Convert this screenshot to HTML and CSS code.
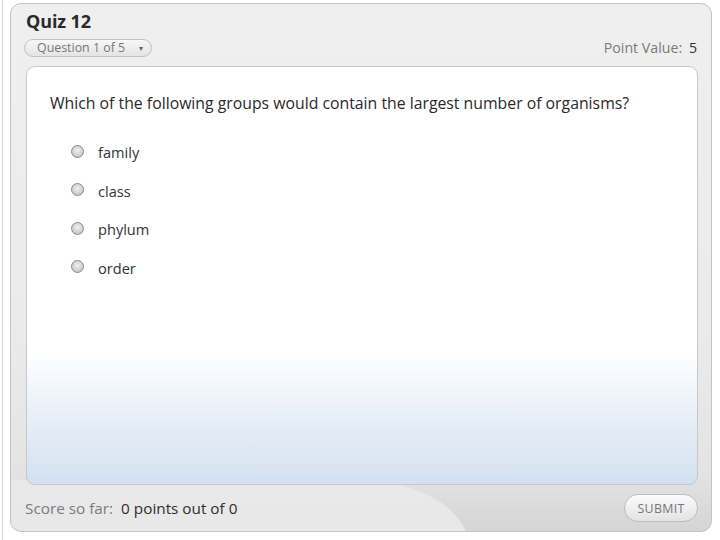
FILE: index.html
```html
<!DOCTYPE html>
<html>
<head>
<meta charset="utf-8">
<link rel="stylesheet" href="styles.css">
</head>
<body>
<div class="edge"></div>
<div class="panel">
  <div class="swoosh"></div>
  <header class="head">
    <h1 class="title">Quiz 12</h1>
    <div class="subrow">
      <div class="picker"><span>Question 1 of 5</span><span class="caret">▾</span></div>
      <div class="points"><span class="muted">Point Value:</span> <span class="val">5</span></div>
    </div>
  </header>
  <main class="card">
    <p class="question">Which of the following groups would contain the largest number of organisms?</p>
    <ul class="options">
      <li class="opt"><span class="radio"></span><span>family</span></li>
      <li class="opt"><span class="radio"></span><span>class</span></li>
      <li class="opt"><span class="radio"></span><span>phylum</span></li>
      <li class="opt"><span class="radio"></span><span>order</span></li>
    </ul>
  </main>
  <footer class="foot">
    <div class="score"><span class="muted">Score so far:</span> <span class="val">0 points out of 0</span></div>
    <button class="submit">SUBMIT</button>
  </footer>
</div>
</body>
</html>
```
FILE: styles.css
```css
html, body { margin: 0; padding: 0; background: #fff; }
body {
  width: 720px; height: 540px; overflow: hidden;
  font-family: "Open Sans", "Noto Sans", sans-serif;
  position: relative;
}
.edge {
  position: absolute; left: 2px; top: 0; width: 1px; height: 540px;
  background: #d4d4d4;
}
.panel {
  position: absolute; left: 10px; top: 3px;
  width: 702px; height: 529px;
  border: 1px solid #c4c4c4;
  border-radius: 11px;
  background: linear-gradient(#efefef 0, #ebebeb 60%, #e4e4e4 88%, #d5d5d5 100%);
  box-sizing: border-box;
  display: flex; flex-direction: column;
  overflow: hidden;
}
.swoosh {
  position: absolute; left: -20px; top: 476px;
  width: 479px; height: 120px;
  border-top-right-radius: 110px 70px;
  background: linear-gradient(#e9e9e9, #e6e6e6);
  z-index: 0;
}
.head { padding: 5px 14px 0 15px; position: relative; z-index: 1; }
.title {
  margin: 0; font-size: 18px; font-weight: 700; color: #2a2a2a;
  line-height: 24px; letter-spacing: -0.1px;
}
.subrow { display: flex; justify-content: space-between; align-items: center; margin-top: 5px; }
.picker {
  margin-left: -2px;
  width: 128px; height: 18px; box-sizing: border-box;
  border: 1px solid #c2c2c2; border-radius: 9px;
  background: linear-gradient(#f7f7f7, #e4e4e4);
  display: flex; align-items: center; justify-content: space-between;
  padding: 0 8px 0 12px;
  font-size: 12.4px; color: #777;
}
.caret { font-size: 8px; color: #666; }
.points { font-size: 14.2px; color: #333; margin-right: 0; }
.muted { color: #7a7a7a; }
.val { color: #2e2e2e; margin-left: 3px; }
.card {
  position: relative; z-index: 1;
  margin: 9px 13px 0 15px;
  height: 419px; box-sizing: border-box;
  border: 1px solid #c8c8c8;
  border-radius: 9px;
  background: linear-gradient(#ffffff 0, #ffffff 68%, #e6eef7 85%, #d3e1ef 100%);
  padding: 24px 0 0 23px;
}
.question { margin: 0; font-size: 15.8px; color: #2a2a2a; line-height: 24px; }
.options { list-style: none; margin: 18px 0 0 0; padding: 0 0 0 21px; }
.opt {
  display: flex; align-items: center; height: 38.5px;
  font-size: 14.6px; color: #333;
}
.radio {
  width: 11px; height: 11px; border-radius: 50%;
  border: 1px solid #8a8a8a;
  background: radial-gradient(circle at 50% 40%, #f0f0f0 0, #d0d0d0 60%, #b8b8b8 100%);
  margin-right: 14px; flex: none;
  margin-top: -2px;
}
.foot {
  position: relative; z-index: 1;
  display: flex; justify-content: space-between; align-items: center;
  padding: 9px 13px 0 14px;
}
.score { font-size: 15.3px; color: #333; }
.score .val { margin-left: 4px; }
.submit {
  width: 74px; height: 28px; box-sizing: border-box;
  border: 1px solid #bdbdbd; border-radius: 14px;
  background: linear-gradient(#fbfbfb, #e3e3e3);
  font-family: "Open Sans", sans-serif; font-size: 12.4px; color: #777;
  letter-spacing: 0.3px; padding: 0;
}
```
